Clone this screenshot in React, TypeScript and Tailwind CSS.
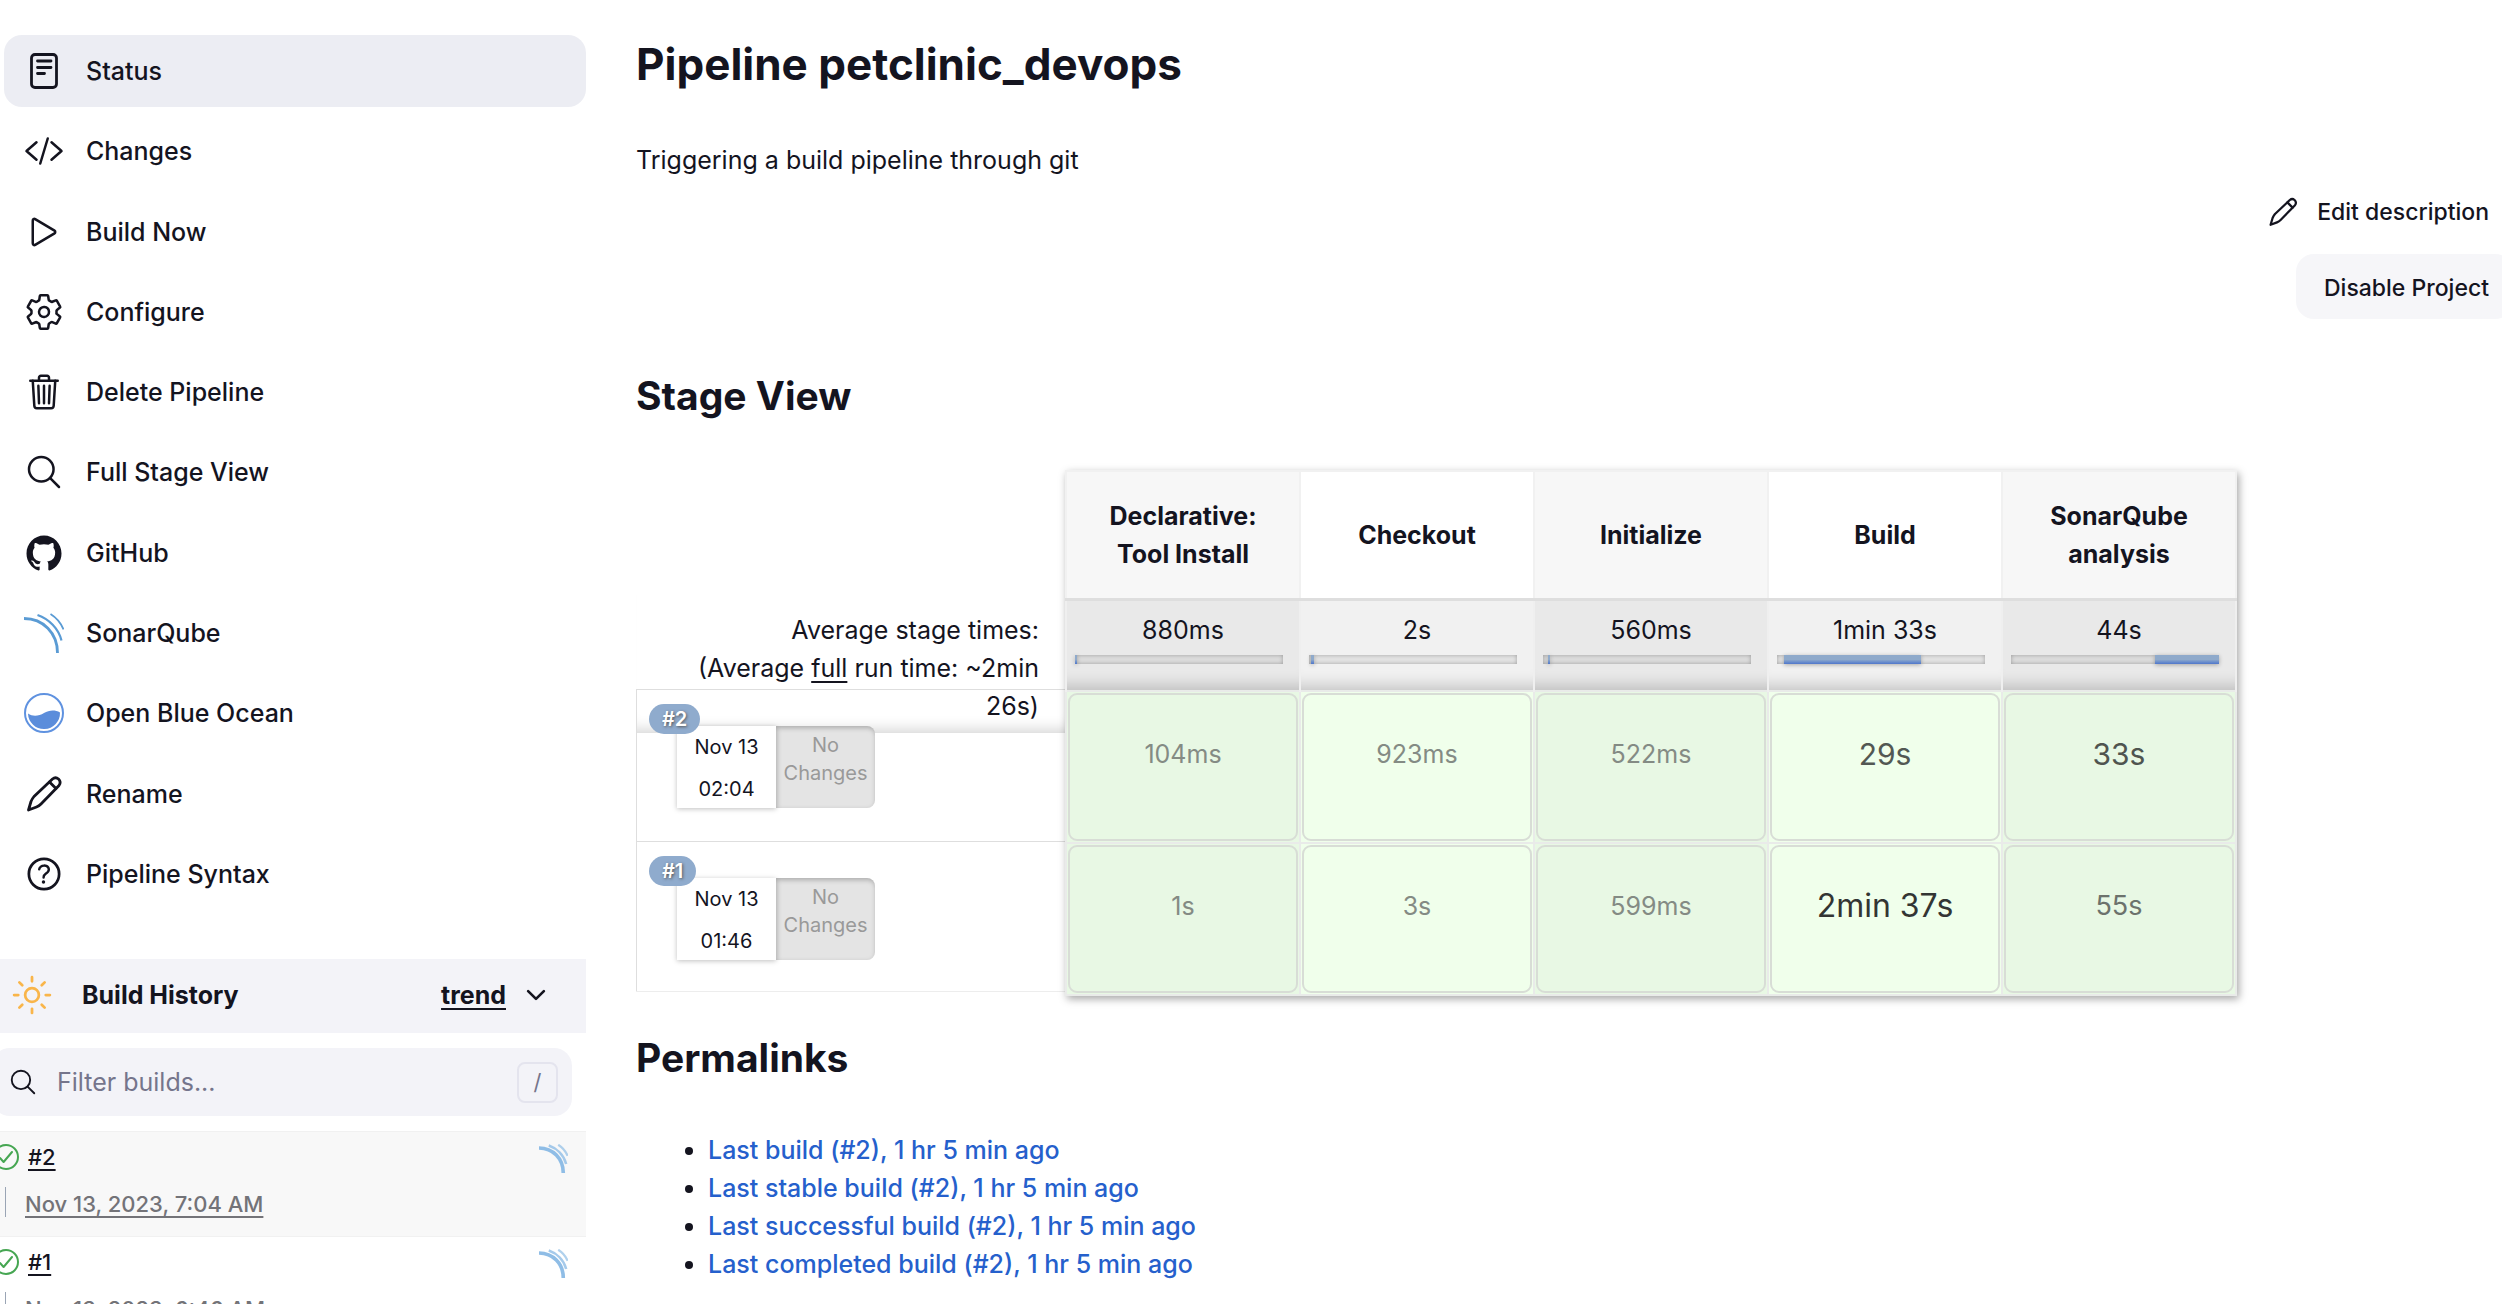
import type { ReactNode } from "react";
import {
  IoCheckmarkCircleOutline,
  IoChevronDown,
  IoCodeSlashOutline,
  IoHelpCircleOutline,
  IoLogoGithub,
  IoPlayOutline,
  IoSearchOutline,
  IoSettingsOutline,
  IoSunnyOutline,
  IoTrashOutline,
} from "react-icons/io5";

function DocumentIcon() {
  return (
    <svg viewBox="0 0 40 40" className="size-10" fill="none" stroke="currentColor" strokeWidth="2.8" strokeLinecap="round" strokeLinejoin="round">
      <rect x="7.5" y="3.5" width="25" height="33" rx="3.5" />
      <path d="M13.5 10h13.500M13.5 16.5h13.500M13.5 22.5h7" />
    </svg>
  );
}

function PencilIcon({ className }: { className: string }) {
  return (
    <svg viewBox="0 0 40 40" className={className} fill="none" stroke="currentColor" strokeWidth="2.8" strokeLinecap="round" strokeLinejoin="round">
      <path d="M4.5 36 L7 27.5 Q8 25 10 22.5 L28.5 5 Q31.5 2.5 34.5 5 Q37.500 8 35 11.500 L17 30 Q15 32 12.500 33 Z" />
      <path d="M25.500 8 L32 14.500" />
    </svg>
  );
}

function SonarIcon({ className }: { className: string }) {
  return (
    <svg viewBox="0 0 40 40" className={className} fill="none" stroke="currentColor">
      <path d="M0 5.500 C19 5.500 33.500 20 33.500 40" strokeWidth="2.800" />
      <path d="M13.500 2 C25 6 34.500 15.500 37.500 27.500" strokeWidth="2.200" />
      <path d="M26.500 1 C32 4.500 37 10 39.500 16.500" strokeWidth="1.800" />
    </svg>
  );
}

function SmallSonarIcon({ className }: { className: string }) {
  return (
    <svg viewBox="0 0 40 40" className={className} fill="none" stroke="currentColor">
      <path d="M0 5.500 C19 5.500 33.500 20 33.500 40" strokeWidth="5" />
      <path d="M13.500 2 C25 6 34.500 15.500 37.500 27.500" strokeWidth="3.500" opacity="0.8" />
      <path d="M26.500 1 C32 4.500 37 10 39.500 16.500" strokeWidth="3" opacity="0.7" />
    </svg>
  );
}

function BlueOceanIcon() {
  return (
    <svg viewBox="0 0 40 40" className="size-10">
      <circle cx="20" cy="20" r="19" fill="none" stroke="#5f92e0" strokeWidth="2" />
      <path d="M4 20.500 C9 24 15 23 20 20 C25 17 31 16.500 36 19.500 A16 16 0 0 1 4 20.500 Z" fill="#5b8ddb" />
    </svg>
  );
}

const tasks: { label: string; icon: ReactNode; active?: boolean }[] = [
  { label: "Status", icon: <DocumentIcon />, active: true },
  { label: "Changes", icon: <IoCodeSlashOutline className="size-10" /> },
  { label: "Build Now", icon: <IoPlayOutline className="size-10" /> },
  { label: "Configure", icon: <IoSettingsOutline className="size-10" /> },
  { label: "Delete Pipeline", icon: <IoTrashOutline className="size-10" /> },
  { label: "Full Stage View", icon: <IoSearchOutline className="size-10" /> },
  { label: "GitHub", icon: <IoLogoGithub className="size-10" /> },
  { label: "SonarQube", icon: <SonarIcon className="size-10 text-[#5a9bd4]" /> },
  { label: "Open Blue Ocean", icon: <BlueOceanIcon /> },
  { label: "Rename", icon: <PencilIcon className="size-10" /> },
  { label: "Pipeline Syntax", icon: <IoHelpCircleOutline className="size-11" /> },
];

const builds = [
  { id: "#2", date: "Nov 13, 2023, 7:04 AM", row: "bg-[#f8f8f8]" },
  { id: "#1", date: "Nov 13, 2023, 6:46 AM", row: "bg-white" },
];

const stages = [
  { name: "Declarative: Tool Install", average: "880ms", start: 0, width: 1 },
  { name: "Checkout", average: "2s", start: 1, width: 1.5 },
  { name: "Initialize", average: "560ms", start: 2.5, width: 1 },
  { name: "Build", average: "1min 33s", start: 3.5, width: 65.5 },
  { name: "SonarQube analysis", average: "44s", start: 69, width: 31 },
];

const small = "text-[25px] text-[#848b84]";
const runs = [
  {
    id: "#2",
    time: "02:04",
    cells: [
      { time: "104ms", style: small },
      { time: "923ms", style: small },
      { time: "522ms", style: small },
      { time: "29s", style: "text-[30px] text-[#535853]" },
      { time: "33s", style: "text-[30px] text-[#4f544f]" },
    ],
  },
  {
    id: "#1",
    time: "01:46",
    cells: [
      { time: "1s", style: small },
      { time: "3s", style: small },
      { time: "599ms", style: small },
      { time: "2min 37s", style: "text-[32px] text-[#333533]" },
      { time: "55s", style: "text-[27px] text-[#6c726c]" },
    ],
  },
];

const permalinks = [
  "Last build (#2), 1 hr 5 min ago",
  "Last stable build (#2), 1 hr 5 min ago",
  "Last successful build (#2), 1 hr 5 min ago",
  "Last completed build (#2), 1 hr 5 min ago",
];

function Sidebar() {
  return (
    <aside className="w-[586px] shrink-0 pt-[35px]">
      <nav className="ml-1">
        <ul className="flex h-[875px] flex-col justify-between">
          {tasks.map((task) => (
            <li key={task.label}>
              <a
                href="#"
                className={
                  task.active
                    ? "flex h-[72px] items-center gap-5 rounded-[18px] bg-[#ecedf3] pl-[18px] font-medium"
                    : "flex h-[72px] items-center gap-5 rounded-[18px] pl-[18px] font-medium"
                }
              >
                <span className="flex w-11 justify-center">{task.icon}</span>
                {task.label}
              </a>
            </li>
          ))}
        </ul>
      </nav>

      <section className="mt-[49px]">
        <header className="flex h-[74px] items-center bg-[#f3f3f8] pr-9 pb-[2px] font-bold">
          <IoSunnyOutline className="ml-[10px] size-11 text-[#f9b54a]" />
          <h2 className="ml-7 flex-1">Build History</h2>
          <a href="#" className="underline decoration-2 underline-offset-4">
            trend
          </a>
          <button type="button" aria-label="Collapse build history" className="ml-4">
            <IoChevronDown className="size-7" />
          </button>
        </header>

        <label className="-ml-2 mt-[15px] mr-[14px] flex h-[68px] items-center rounded-[18px] bg-[#f3f3f8] pr-[14px] pl-4">
          <IoSearchOutline className="size-[30px] shrink-0" />
          <input
            type="text"
            aria-label="Filter builds"
            placeholder="Filter builds..."
            className="ml-[19px] min-w-0 flex-1 bg-transparent outline-none placeholder:text-[#75758c]"
          />
          <kbd className="flex size-[41px] items-center justify-center rounded-lg border-2 border-[#e4e4ee] font-[Inter,sans-serif] text-[22px] text-[#75758c]">
            /
          </kbd>
        </label>

        <ul className="mt-[15px]">
          {builds.map((build) => (
            <li key={build.id} className={`h-[105px] border-t border-[#f1f1f1] pt-2 ${build.row}`}>
              <div className="flex items-center">
                <IoCheckmarkCircleOutline className="-ml-[10px] size-8 text-[#46a652]" />
                <a href="#" className="ml-[6px] flex-1 text-[22px] leading-8 font-medium underline decoration-2 underline-offset-4">
                  {build.id}
                </a>
                <SmallSonarIcon className="mt-1 mr-[18px] size-[29px] text-[#8fbde6]" />
              </div>
              <div className="mt-[14px] ml-[5px] flex h-[30px] items-center border-l border-[#9aa5b5] pt-1 pl-[19px]">
                <a href="#" className="text-[22px] font-medium text-[#737378] underline decoration-2 underline-offset-4">
                  {build.date}
                </a>
              </div>
            </li>
          ))}
        </ul>
      </section>
    </aside>
  );
}

function RunCard({ id, time }: { id: string; time: string }) {
  return (
    <div className="relative h-[152px] border-t border-l border-[#dedede] pt-9 pl-10 last:h-[150px]">
      <div className="flex text-center text-[20px]">
        <div className="flex h-[82px] w-[99px] flex-col justify-between bg-white pt-[6px] pb-1 leading-[30px] shadow-[0_1px_5px_rgba(0,0,0,0.25)]">
          <span>Nov 13</span>
          <span>{time}</span>
        </div>
        <div className="h-[82px] w-[99px] rounded-r-lg bg-[#e4e4e4] pt-[5px] leading-7 text-[#999] shadow-[inset_1px_2px_5px_rgba(0,0,0,0.25)]">
          No Changes
        </div>
      </div>
      <a
        href="#"
        className="absolute top-[14px] left-3 flex h-[30px] items-center rounded-full bg-[#8fabcd] px-[13px] text-[20px] font-semibold text-white [text-shadow:1px_1px_3px_#555]"
      >
        {id}
      </a>
    </div>
  );
}

function StageView() {
  return (
    <div className="flex items-start">
      <div className="w-[429px] shrink-0">
        <div className="mt-[125px] h-[94px]">
          <p className="h-[138px] pt-4 pr-[26px] pl-10 text-right leading-[38px] shadow-[inset_0_-16px_16px_-14px_rgba(0,0,0,0.2)]">
            Average stage times:
            <br />
            (Average <span className="underline decoration-2 underline-offset-4">full</span> run time: ~2min 26s)
          </p>
        </div>
        <div className="border-b border-[#ededed]">
          {runs.map((run) => (
            <RunCard key={run.id} id={run.id} time={run.time} />
          ))}
        </div>
      </div>

      <table className="relative w-[1172px] table-fixed border-collapse bg-white text-center shadow-[2px_3px_8px_rgba(0,0,0,0.35)]">
        <thead>
          <tr className="h-[128px]">
            {stages.map((stage) => (
              <th key={stage.name} scope="col" className="border-2 border-[#f1f1f1] px-8 leading-[38px] font-bold odd:bg-[#f7f7f7]">
                {stage.name}
              </th>
            ))}
          </tr>
        </thead>
        <tbody>
          <tr className="h-[92px]">
            {stages.map((stage) => (
              <td
                key={stage.name}
                className="border-x-2 border-t-[3px] border-x-[#efefef] border-t-[#dedede] bg-[#f1f1f1] px-2 pb-[26px] align-bottom shadow-[inset_0_-20px_16px_-16px_rgba(0,0,0,0.2)] odd:bg-[#e9e9e9]"
              >
                <div className="leading-[38px]">{stage.average}</div>
                <div className="relative mt-[6px] mr-2 h-[9px] bg-black/5 shadow-[inset_0_0_4px_rgba(0,0,0,0.3)]">
                  <div
                    className="absolute h-full bg-linear-to-b from-[#8faacb] from-50% to-[#4f76cb] shadow-[0_1px_4px_rgba(0,0,0,0.3)]"
                    style={{ left: `${stage.start}%`, width: `${stage.width}%` }}
                  />
                </div>
              </td>
            ))}
          </tr>
          {runs.map((run) => (
            <tr key={run.id} className="h-[152px]">
              {run.cells.map((cell, index) => (
                <td key={index} className="border-2 border-[#e9ebe9] bg-[#f0ffeb] p-px odd:bg-[#e8f8e4]">
                  <div className={`flex h-[148px] items-center justify-center rounded-[9px] border-2 border-[#d8ddd6] pb-[26px] ${cell.style}`}>
                    {cell.time}
                  </div>
                </td>
              ))}
            </tr>
          ))}
        </tbody>
      </table>
    </div>
  );
}

export default function App() {
  return (
    <div className="flex h-screen overflow-hidden bg-white font-[Inter,sans-serif] text-[25px] leading-[38px] text-[#14141f]">
      <Sidebar />
      <main className="ml-[50px] min-w-0 flex-1">
        <h1 className="mt-9 text-[44px] leading-[56px] font-bold">Pipeline petclinic_devops</h1>
        <p className="mt-[49px]">Triggering a build pipeline through git</p>
        <div className="-mr-[11px] flex flex-col items-end text-[23px] font-medium">
          <a href="#" className="mt-[14px] mr-6 flex items-center gap-[18px]">
            <PencilIcon className="size-8" />
            Edit description
          </a>
          <button type="button" className="mt-[23px] h-[65px] rounded-[18px] bg-[#f6f6f9] pt-[2px] pr-6 pl-7">
            Disable Project
          </button>
        </div>
        <h2 className="mt-[50px] text-[39px] leading-[54px] font-bold">Stage View</h2>
        <div className="mt-[47px]">
          <StageView />
        </div>
        <h2 className="mt-[35px] text-[39px] leading-[54px] font-bold">Permalinks</h2>
        <ul className="mt-[46px] list-disc pl-[72px] font-medium">
          {permalinks.map((text) => (
            <li key={text}>
              <a href="#" className="text-[#2560cc]">
                {text}
              </a>
            </li>
          ))}
        </ul>
      </main>
    </div>
  );
}
